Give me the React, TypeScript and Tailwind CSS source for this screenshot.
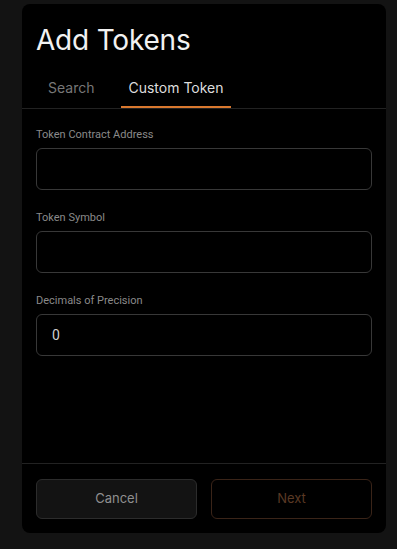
import React, { useState } from 'react';

const fields = [
  { label: 'Token Contract Address', value: '' },
  { label: 'Token Symbol', value: '' },
  { label: 'Decimals of Precision', value: '0' },
];

export default function App() {
  const [tab, setTab] = useState<'search' | 'custom'>('custom');

  return (
    <div className="min-h-screen w-full bg-[#131313] pt-[4px] pl-[22px]">
      <div className="w-[364px] h-[529px] bg-black rounded-[8px] flex flex-col">
        {/* Header */}
        <div className="px-[14px] pt-[18px]">
          <h1 className="text-[28px] leading-[36px] text-[#f2f2f2] font-['Inter',sans-serif] font-normal tracking-[-0.2px]">
            Add Tokens
          </h1>
        </div>

        {/* Tabs */}
        <div className="mt-[20px] flex pl-[14px] border-b border-[#222]">
          <button
            onClick={() => setTab('search')}
            className={`px-[12px] pb-[8px] text-[14px] leading-[20px] font-['Inter',sans-serif] border-b-2 ${
              tab === 'search' ? 'text-[#ddd] border-[#d9782f]' : 'text-[#777] border-transparent'
            }`}
          >
            Search
          </button>
          <button
            onClick={() => setTab('custom')}
            className={`ml-[15px] px-[7px] pb-[8px] text-[14px] leading-[20px] font-['Inter',sans-serif] border-b-2 ${
              tab === 'custom' ? 'text-[#ddd] border-[#d9782f]' : 'text-[#777] border-transparent'
            }`}
          >
            Custom Token
          </button>
        </div>

        {/* Fields */}
        <div className="flex-1 px-[14px] pt-[19px] flex flex-col gap-[21px]">
          {fields.map((f) => (
            <div key={f.label} className="flex flex-col">
              <label className="text-[11px] leading-[14px] text-[#8a8a8a] font-['Roboto',sans-serif] mb-[6px]">
                {f.label}
              </label>
              <input
                defaultValue={f.value}
                className="h-[42px] w-full rounded-[6px] border border-[#383838] bg-black px-[15px] text-[14px] text-[#cfcfcf] font-['Roboto',sans-serif] outline-none"
              />
            </div>
          ))}
        </div>

        {/* Footer */}
        <div className="border-t border-[#222] px-[14px] pt-[15px] pb-[14px] flex gap-[14px]">
          <button className="flex-1 h-[40px] rounded-[6px] bg-[#131313] border border-[#2c2c2c] text-[13px] text-[#8f8f8f] font-['Inter',sans-serif]">
            Cancel
          </button>
          <button
            disabled
            className="flex-1 h-[40px] rounded-[6px] bg-black border border-[#3a2418] text-[13px] text-[#5a3924] font-['Inter',sans-serif]"
          >
            Next
          </button>
        </div>
      </div>
    </div>
  );
}
